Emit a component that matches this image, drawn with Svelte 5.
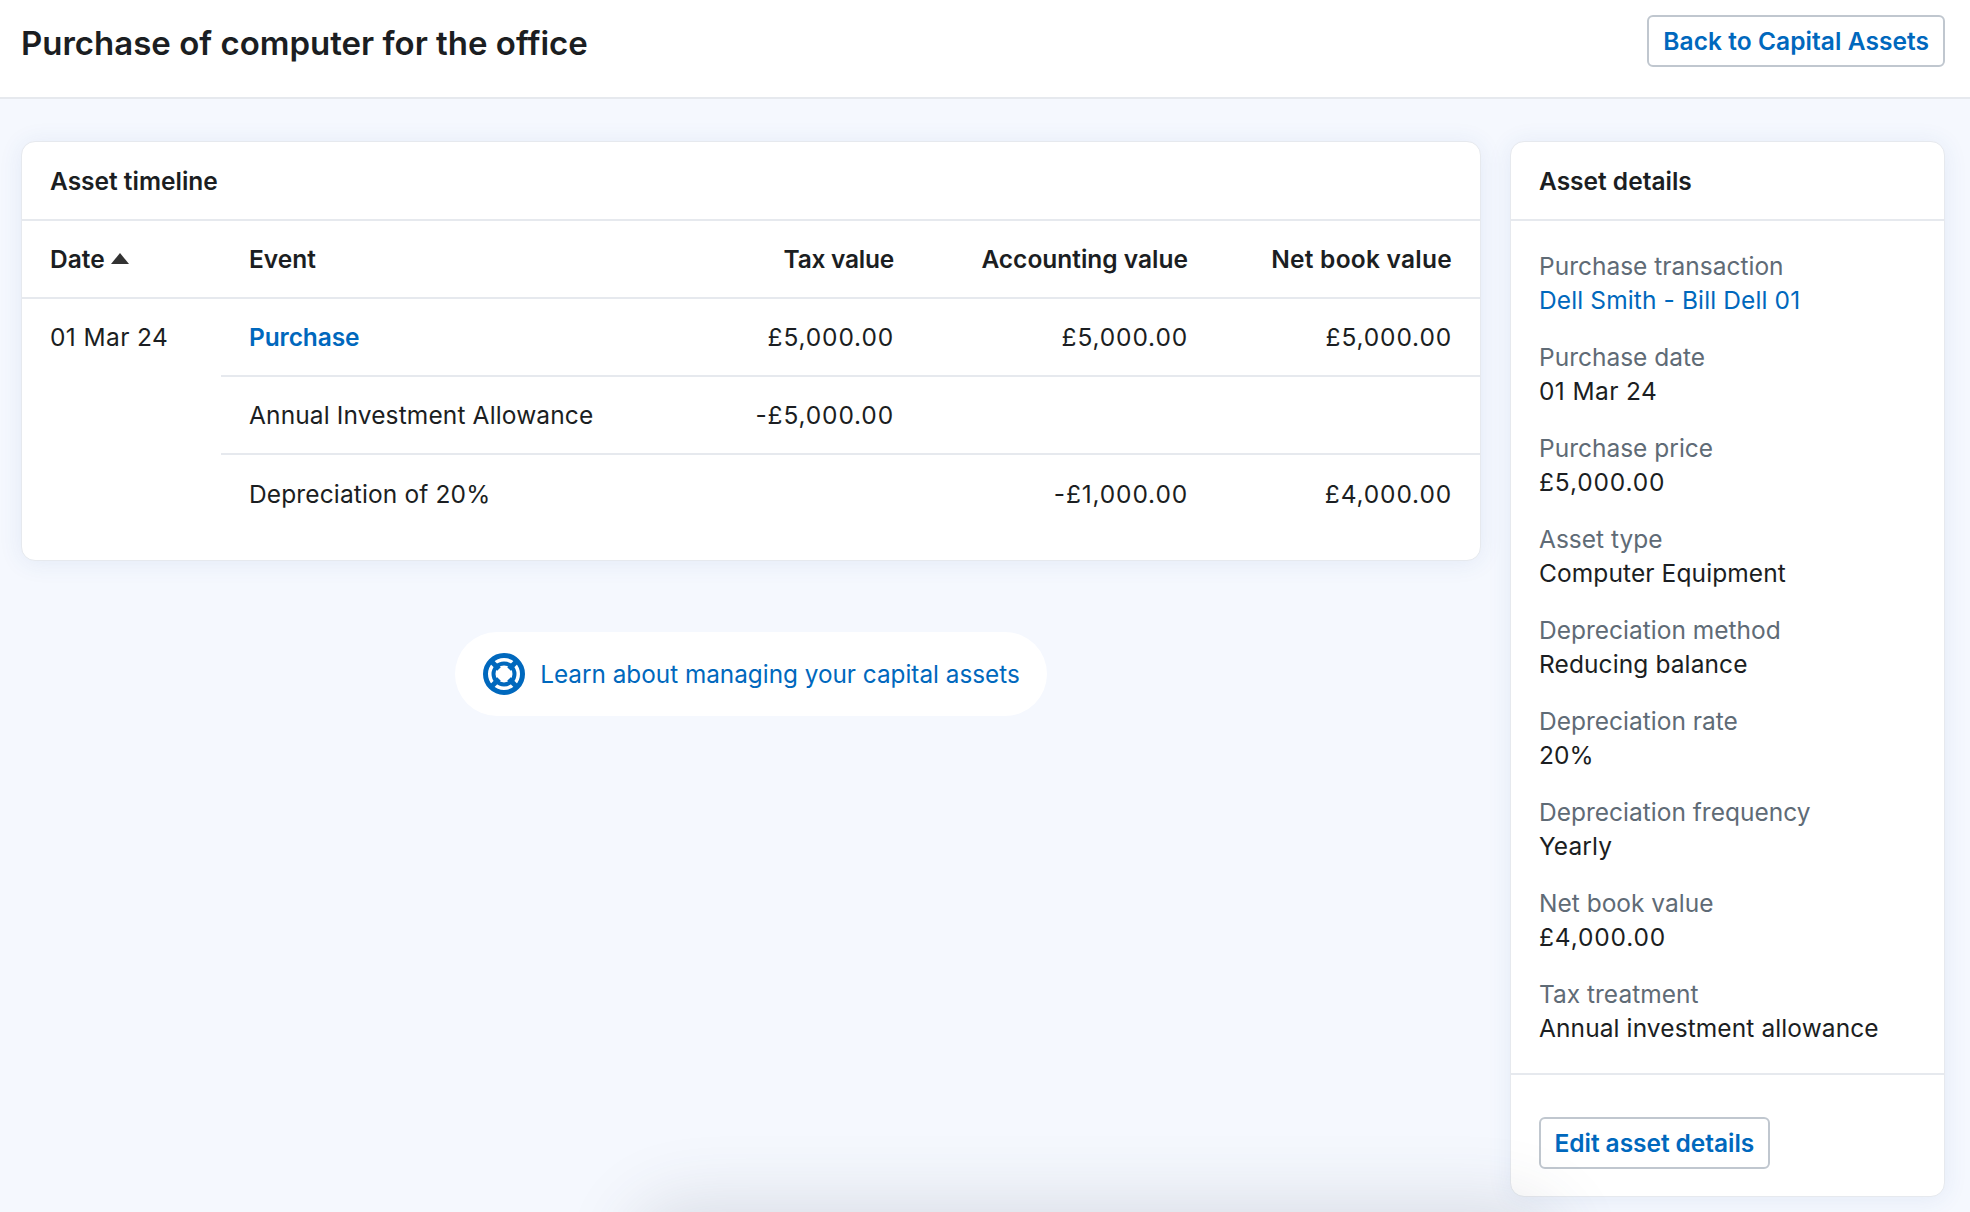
<script>
  const details = [
    ['Purchase transaction', 'Dell Smith - Bill Dell 01', 'link'],
    ['Purchase date', '01 Mar 24', 'date-val'],
    ['Purchase price', '£5,000.00', 'money'],
    ['Asset type', 'Computer Equipment', ''],
    ['Depreciation method', 'Reducing balance', ''],
    ['Depreciation rate', '20%', ''],
    ['Depreciation frequency', 'Yearly', ''],
    ['Net book value', '£4,000.00', 'money'],
    ['Tax treatment', 'Annual investment allowance', '']
  ];
</script>

<div class="page">
  <header class="top">
    <h1>Purchase of computer for the office</h1>
    <button class="btn back">Back to Capital Assets</button>
  </header>
  <main class="content">
    <div class="left">
      <section class="card">
        <h2 class="card-title">Asset timeline</h2>
        <div class="grid head">
          <div class="date">Date <span class="tri"></span></div>
          <div class="ev">Event</div>
          <div class="num tax">Tax value</div>
          <div class="num">Accounting value</div>
          <div class="num net">Net book value</div>
        </div>
        <div class="body">
          <div class="date cell-date">01 Mar 24</div>
          <div class="rows">
            <div class="grid row">
              <div class="ev"><a class="purchase" href="#p">Purchase</a></div>
              <div class="num money">£5,000.00</div>
              <div class="num money">£5,000.00</div>
              <div class="num money">£5,000.00</div>
            </div>
            <div class="grid row">
              <div class="ev">Annual Investment Allowance</div>
              <div class="num money">-£5,000.00</div>
              <div class="num"></div>
              <div class="num"></div>
            </div>
            <div class="grid row last">
              <div class="ev">Depreciation of 20%</div>
              <div class="num"></div>
              <div class="num money">-£1,000.00</div>
              <div class="num money">£4,000.00</div>
            </div>
          </div>
        </div>
      </section>
      <a class="help" href="#h">
        <svg width="42" height="42" viewBox="0 0 42 42" aria-hidden="true">
          <g fill="none" stroke="#0068bd">
            <circle cx="21" cy="21" r="18.5" stroke-width="5"/>
            <circle cx="21" cy="21" r="10.5" stroke-width="4"/>
            <path stroke-width="5" d="M8 8l8 8M34 8l-8 8M8 34l8-8M34 34l-8-8"/>
          </g>
        </svg>
        <span>Learn about managing your capital assets</span>
      </a>
    </div>
    <aside class="card side">
      <h2 class="card-title">Asset details</h2>
      <dl>
        {#each details as [k, v, kind]}
          <div class="item">
            <dt>{k}</dt>
            <dd class={kind}>{v}</dd>
          </div>
        {/each}
      </dl>
      <div class="foot"><button class="btn edit">Edit asset details</button></div>
    </aside>
  </main>
  <div class="glow"></div>
</div>

<style>
  :global(body) { margin: 0; background: #f5f8fe; }
  .page {
    position: relative; height: 1212px; overflow: hidden;
    font-family: "Inter", "Lato", sans-serif; color: #1b1e22;
    font-size: 24.5px; background: #f5f8fe;
  }
  .top {
    height: 82px; background: #fff; border-bottom: 2px solid #e6e9ee;
    display: flex; align-items: flex-start; justify-content: space-between;
    padding: 15px 25px 0 21px;
  }
  h1 { margin: 0; font-size: 33px; line-height: 56px; font-weight: 600; }
  .btn {
    font: inherit; font-weight: 600; color: #0068bd; background: #fff;
    border: 2px solid #c0c7cf; border-radius: 6px; height: 52px;
    padding: 0 14px; display: block; white-space: nowrap;
  }
  .btn.back { letter-spacing: .06px; }
  .btn.edit { letter-spacing: -.05px; padding: 0 13.5px; }
  .content {
    display: flex; align-items: flex-start; gap: 29px;
    padding: 42px 25px 0 21px;
  }
  .left { width: 1460px; flex: none; display: flex; flex-direction: column; align-items: center; }
  .card {
    background: #fff; border: 1px solid #e6e9ee; border-radius: 14px;
    box-shadow: 0 2px 24px rgba(40, 90, 170, .09); width: 100%; box-sizing: border-box;
  }
  .card-title {
    margin: 0; height: 79px; box-sizing: border-box; padding: 0 28px;
    display: flex; align-items: center; font-size: inherit; font-weight: 600;
    border-bottom: 2px solid #e6e9ee;
  }
  .grid { display: grid; grid-template-columns: 407px 266px 294px 264px; padding-right: 28px; align-items: center; }
  .head { height: 78px; box-sizing: border-box; border-bottom: 2px solid #e6e9ee; grid-template-columns: 199px 407px 266px 294px 264px; font-weight: 600; }
  .date { padding-left: 28px; }
  .head .date { display: flex; align-items: center; gap: 6px; }
  .tri { width: 0; height: 0; border-left: 9px solid transparent; border-right: 9px solid transparent; border-bottom: 11px solid #333; margin-bottom: 1px; }
  .ev { padding-left: 28px; }
  .row .ev { letter-spacing: .13px; }
  .num { text-align: right; }
  .tax { letter-spacing: -.25px; }
  .net { letter-spacing: .25px; }
  .money { letter-spacing: .85px; }
  .body { display: flex; padding-bottom: 27px; }
  .cell-date { width: 199px; box-sizing: border-box; height: 78px; padding-bottom: 2px; display: flex; align-items: center; flex: none; letter-spacing: .4px; }
  .rows { flex: 1; min-width: 0; }
  .row { height: 78px; box-sizing: border-box; border-bottom: 2px solid #e6e9ee; }
  .row.last { border-bottom: 0; }
  .purchase { color: #0068bd; font-weight: 600; text-decoration: none; letter-spacing: -.1px; }
  .help {
    margin-top: 71px; height: 84px; padding: 0 27px 0 28px; display: flex; align-items: center; gap: 15px;
    background: #fff; border-radius: 42px; color: #0068bd; text-decoration: none; font-size: 24.3px;
  }
  .side { width: 435px; flex: none; height: 1056px; display: flex; flex-direction: column; }
  dl { margin: 0; padding: 27.5px 28px 0; flex: 1; display: flex; flex-direction: column; gap: 22px; }
  dt { color: #5f6b76; line-height: 35px; }
  dd { margin: -1px 0 0; line-height: 35px; letter-spacing: .1px; }
  dd.link { color: #0068bd; letter-spacing: .12px; }
  dd.date-val { letter-spacing: .4px; }
  dd.money { letter-spacing: .85px; }
  .foot { border-top: 2px solid #e6e9ee; padding: 42px 28px 27px; }
  .glow {
    position: absolute; left: 660px; right: 440px; bottom: -70px; height: 50px;
    border-radius: 30px; box-shadow: 0 0 70px 30px rgba(60, 70, 90, .15); background: #667;
  }
</style>
